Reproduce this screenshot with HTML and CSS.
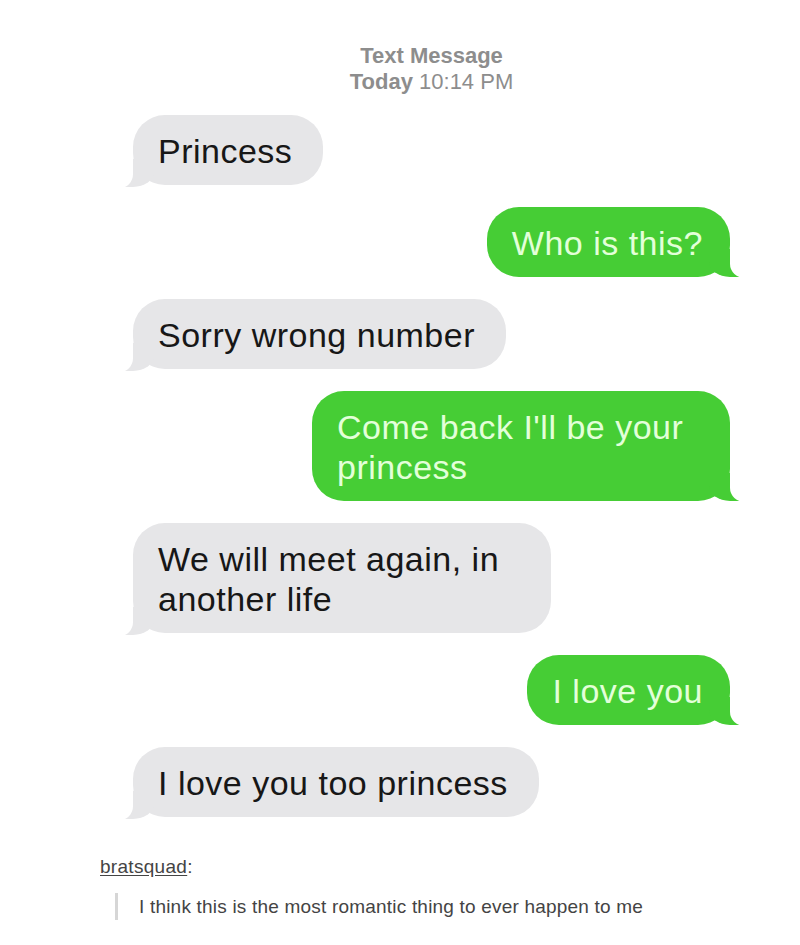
FILE: index.html
```html
<!DOCTYPE html>
<html lang="en">
<head>
<meta charset="utf-8">
<title>Text Message</title>
<link rel="stylesheet" href="styles.css">
</head>
<body>
<main class="page">
  <header class="meta">
    <div class="meta-title">Text Message</div>
    <div><span class="meta-day">Today</span> 10:14 PM</div>
  </header>
  <section class="thread">
    <div class="bubble recv">Princess</div>
    <div class="bubble sent">Who is this?</div>
    <div class="bubble recv">Sorry wrong number</div>
    <div class="bubble sent">Come back I'll be your princess</div>
    <div class="bubble recv">We will meet again, in another life</div>
    <div class="bubble sent">I love you</div>
    <div class="bubble recv">I love you too princess</div>
  </section>
  <footer class="post">
    <p class="author"><span class="user">bratsquad</span>:</p>
    <blockquote class="quote">I think this is the most romantic thing to ever happen to me</blockquote>
  </footer>
</main>
</body>
</html>
```

FILE: styles.css
```css
* {
  box-sizing: border-box;
}

html,
body {
  margin: 0;
  background: #fff;
}

body {
  font-family: "Liberation Sans", Arial, sans-serif;
}

.page {
  width: 800px;
  padding: 43px 70px 0 100px;
}

.meta {
  margin-left: 33px;
  text-align: center;
  color: #8d8d8d;
  font-size: 22px;
  line-height: 26px;
}

.meta-title,
.meta-day {
  font-weight: 700;
}

.thread {
  margin-left: 33px;
  margin-top: 20px;
  display: flex;
  flex-direction: column;
  gap: 22px;
}

.bubble {
  position: relative;
  z-index: 0;
  max-width: 418px;
  padding: 16px 25px 14px;
  border-radius: 32px;
  font-size: 34px;
  line-height: 40px;
  letter-spacing: 0.5px;
}

.bubble::before,
.bubble::after {
  content: "";
  position: absolute;
  z-index: -1;
}

.recv {
  align-self: flex-start;
  padding-right: 31px;
  background: #e6e6e8;
  color: #171717;
}

.sent {
  align-self: flex-end;
  padding-right: 27px;
  background: #46cd35;
  color: #e3ffd9;
}

.sent::before {
  bottom: 0;
  right: -13px;
  width: 34px;
  height: 28px;
  background: #46cd35;
  border-bottom-left-radius: 21px 15px;
}

.sent::after {
  bottom: -1px;
  right: -22px;
  width: 22px;
  height: 29px;
  background: #fff;
  border-bottom-left-radius: 15px 14px;
}

.recv::before {
  bottom: -2px;
  left: -11px;
  width: 32px;
  height: 28px;
  background: #e6e6e8;
  border-bottom-right-radius: 21px 15px;
}

.recv::after {
  bottom: -3px;
  left: -22px;
  width: 22px;
  height: 29px;
  background: #fff;
  border-bottom-right-radius: 13px 14px;
}

.post {
  margin-top: 39px;
  color: #444;
}

.author {
  margin: 0;
  font-size: 19px;
  line-height: 22px;
  letter-spacing: 0.3px;
}

.user {
  text-decoration: underline;
  text-underline-offset: 2px;
}

.quote {
  margin: 15px 0 0 15px;
  padding-left: 21px;
  border-left: 3px solid #d6d6d6;
  font-size: 19px;
  line-height: 27px;
  letter-spacing: 0.2px;
}
```
